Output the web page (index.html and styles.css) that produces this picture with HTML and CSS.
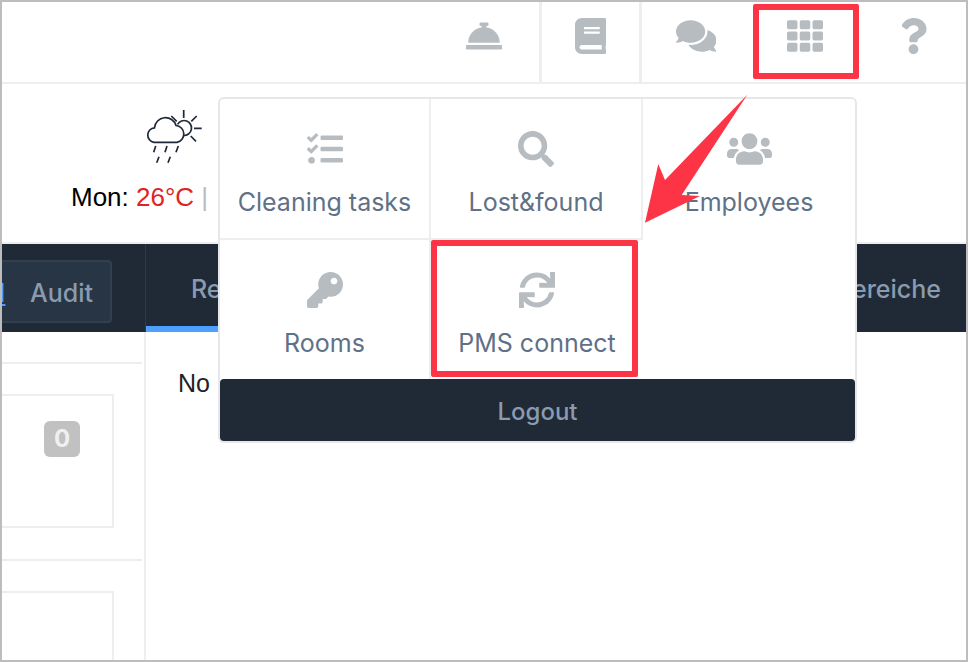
FILE: index.html
```html
<!DOCTYPE html>
<html lang="en">
<head>
    <meta charset="UTF-8">
    <title>Hotel dashboard</title>
    <link rel="stylesheet" href="styles.css">
</head>
<body>
    <div class="frame">
        <div class="topbar">
            <div class="tool tool-bell">
                <svg class="icon" viewBox="0 0 512 512"><path d="M288 130.54V112h16c8.84 0 16-7.16 16-16V80c0-8.84-7.16-16-16-16h-96c-8.84 0-16 7.16-16 16v16c0 8.84 7.16 16 16 16h16v18.54C115.49 146.11 32 236.18 32 352h448c0-115.82-83.49-205.89-192-221.46zM496 384H16c-8.84 0-16 7.16-16 16v32c0 8.84 7.16 16 16 16h480c8.84 0 16-7.16 16-16v-32c0-8.84-7.16-16-16-16z"/></svg>
            </div>
            <div class="tool tool-book">
                <svg class="icon" viewBox="0 0 448 512"><path d="M448 360V24c0-13.3-10.7-24-24-24H96C43 0 0 43 0 96v320c0 53 43 96 96 96h328c13.3 0 24-10.7 24-24v-16c0-7.5-3.5-14.3-8.9-18.7-4.2-15.4-4.2-59.3 0-74.7 5.4-4.3 8.9-11.1 8.9-18.6zM128 134c0-3.3 2.7-6 6-6h212c3.3 0 6 2.7 6 6v20c0 3.3-2.7 6-6 6H134c-3.3 0-6-2.7-6-6v-20zm0 64c0-3.3 2.7-6 6-6h212c3.3 0 6 2.7 6 6v20c0 3.3-2.7 6-6 6H134c-3.3 0-6-2.7-6-6v-20zm253.4 250H96c-17.7 0-32-14.3-32-32 0-17.6 14.4-32 32-32h285.4c-1.9 17.1-1.9 46.9 0 64z"/></svg>
            </div>
            <div class="tool tool-chat">
                <svg class="icon" viewBox="0 0 576 512"><path d="M416 192c0-88.4-93.1-160-208-160S0 103.6 0 192c0 34.3 14.1 65.9 38 92-13.4 30.2-35.5 54.2-35.8 54.5-2.2 2.3-2.8 5.7-1.5 8.7S4.8 352 8 352c36.6 0 66.9-12.3 88.7-25 32.2 15.7 70.3 25 111.3 25 114.9 0 208-71.6 208-160zm122 220c23.9-26 38-57.7 38-92 0-66.9-53.5-124.2-129.3-148.1.9 6.6 1.3 13.3 1.3 20.1 0 105.9-107.7 192-240 192-10.8 0-21.3-.8-31.7-1.9C207.8 439.6 281.8 480 368 480c41 0 79.1-9.2 111.3-25 21.8 12.7 52.1 25 88.7 25 3.2 0 6.1-1.9 7.3-4.8 1.3-2.9.7-6.3-1.5-8.7-.3-.3-22.4-24.2-35.8-54.5z"/></svg>
            </div>
            <div class="tool tool-apps">
                <svg class="icon" viewBox="0 0 512 512">
                    <rect x="0" y="32" width="149" height="128" rx="24"/><rect x="181" y="32" width="150" height="128" rx="24"/><rect x="363" y="32" width="149" height="128" rx="24"/>
                    <rect x="0" y="192" width="149" height="128" rx="24"/><rect x="181" y="192" width="150" height="128" rx="24"/><rect x="363" y="192" width="149" height="128" rx="24"/>
                    <rect x="0" y="352" width="149" height="128" rx="24"/><rect x="181" y="352" width="150" height="128" rx="24"/><rect x="363" y="352" width="149" height="128" rx="24"/>
                </svg>
            </div>
            <div class="tool tool-help">
                <svg class="icon" viewBox="0 0 384 512"><path d="M202.021 0C122.202 0 70.503 32.703 29.914 91.026c-7.363 10.58-5.093 25.086 5.178 32.874l43.138 32.709c10.373 7.865 25.132 6.026 33.253-4.148 25.049-31.381 43.63-49.449 82.757-49.449 30.764 0 68.816 19.799 68.816 49.631 0 22.552-18.617 34.134-48.993 51.164-35.423 19.86-82.299 44.576-82.299 106.405V320c0 13.255 10.745 24 24 24h72.471c13.255 0 24-10.745 24-24v-5.773c0-42.86 125.268-44.645 125.268-160.627C377.504 66.256 286.902 0 202.021 0zM192 373.459c-38.196 0-69.271 31.075-69.271 69.271 0 38.195 31.075 69.27 69.271 69.27s69.271-31.075 69.271-69.271-31.075-69.27-69.271-69.27z"/></svg>
            </div>
        </div>

        <div class="weather">
            <svg class="weather-icon" viewBox="0 0 57 55">
                <path d="M8 32.3a7.3 7.3 0 0 1 .5-14.5A11 11 0 0 1 30 15.5a8.5 8.5 0 0 1 1 16.8z"/>
                <path d="M31.5 14.3A7.5 7.5 0 1 1 37.5 25.5"/>
                <path d="M37.7 0v8M50.7 6l-5.4 5.3M48 18.3h7.7M44.7 26l5.3 5.3M25.3 6l5.4 5.3"/>
                <path d="M9.7 36l-2 6.3M21 36l-2 6.3M32.3 36l-2.3 6.3M13 46.7l-2.3 6M24.3 46.7l-2.3 6"/>
            </svg>
            <div class="forecast">Mon: <span class="temp">26°C</span> <span class="sep">|</span></div>
        </div>

        <div class="darkbar">
            <div class="audit-btn"><a class="audit-link" href="#">1</a><span>Audit</span></div>
            <div class="tab tab-active">Reinigung</div>
            <div class="tab tab-last">Bereiche</div>
        </div>

        <div class="main">
            <div class="queue">
                <div class="queue-row">
                    <div class="queue-card"><span class="badge">0</span></div>
                </div>
                <div class="queue-row">
                    <div class="queue-card"></div>
                </div>
            </div>
            <div class="content">No</div>
        </div>

        <div class="menu">
            <div class="menu-grid">
                <div class="menu-item">
                    <svg class="icon" viewBox="0 0 512 512"><path d="M139.61 35.5a12 12 0 0 0-17 0L58.93 98.81l-22.7-22.12a12 12 0 0 0-17 0L3.53 92.41a12 12 0 0 0 0 17l47.59 47.4a12.78 12.78 0 0 0 17.61 0l15.59-15.62L156.52 69a12.09 12.09 0 0 0 .09-17zm0 159.19a12 12 0 0 0-17 0l-63.68 63.72-22.7-22.1a12 12 0 0 0-17 0L3.53 252a12 12 0 0 0 0 17L51 316.5a12.77 12.77 0 0 0 17.6 0l15.7-15.69 72.2-72.22a12 12 0 0 0 .09-16.9zM64 368c-26.49 0-48.59 21.5-48.59 48S37.53 464 64 464a48 48 0 0 0 0-96zm432 16H208a16 16 0 0 0-16 16v32a16 16 0 0 0 16 16h288a16 16 0 0 0 16-16v-32a16 16 0 0 0-16-16zm0-320H208a16 16 0 0 0-16 16v32a16 16 0 0 0 16 16h288a16 16 0 0 0 16-16V80a16 16 0 0 0-16-16zm0 160H208a16 16 0 0 0-16 16v32a16 16 0 0 0 16 16h288a16 16 0 0 0 16-16v-32a16 16 0 0 0-16-16z"/></svg>
                    <span>Cleaning tasks</span>
                </div>
                <div class="menu-item">
                    <svg class="icon" viewBox="0 0 512 512"><path d="M505 442.7L405.3 343c-4.5-4.5-10.6-7-17-7H372c27.6-35.3 44-79.7 44-128C416 93.1 322.9 0 208 0S0 93.1 0 208s93.1 208 208 208c48.3 0 92.7-16.4 128-44v16.3c0 6.4 2.5 12.5 7 17l99.7 99.7c9.4 9.4 24.6 9.4 33.9 0l28.3-28.3c9.4-9.4 9.4-24.6.1-34zM208 336c-70.7 0-128-57.2-128-128 0-70.7 57.2-128 128-128 70.7 0 128 57.2 128 128 0 70.7-57.2 128-128 128z"/></svg>
                    <span>Lost&amp;found</span>
                </div>
                <div class="menu-item">
                    <svg class="icon" viewBox="0 0 640 512"><path d="M96 224c35.3 0 64-28.7 64-64s-28.7-64-64-64-64 28.7-64 64 28.7 64 64 64zm448 0c35.3 0 64-28.7 64-64s-28.7-64-64-64-64 28.7-64 64 28.7 64 64 64zm32 32h-64c-17.6 0-33.5 7.1-45.1 18.6 40.3 22.1 68.9 62 75.1 109.4h66c17.7 0 32-14.3 32-32v-32c0-35.3-28.7-64-64-64zm-256 0c61.9 0 112-50.1 112-112S381.9 32 320 32 208 82.1 208 144s50.1 112 112 112zm76.8 32h-8.3c-20.8 10-43.9 16-68.5 16s-47.6-6-68.5-16h-8.3C179.6 288 128 339.6 128 403.2V432c0 26.5 21.5 48 48 48h288c26.5 0 48-21.5 48-48v-28.8c0-63.6-51.6-115.2-115.2-115.2zm-223.7-13.4C161.5 263.1 145.6 256 128 256H64c-35.3 0-64 28.7-64 64v32c0 17.7 14.3 32 32 32h65.9c6.3-47.4 34.9-87.3 75.2-109.4z"/></svg>
                    <span>Employees</span>
                </div>
                <div class="menu-item">
                    <svg class="icon" viewBox="0 0 512 512"><path d="M512 176.001C512 273.203 433.202 352 336 352c-11.22 0-22.19-1.062-32.827-3.069l-24.012 27.014A23.999 23.999 0 0 1 261.223 384H224v40c0 13.255-10.745 24-24 24h-40v40c0 13.255-10.745 24-24 24H24c-13.255 0-24-10.745-24-24v-78.059c0-6.365 2.529-12.47 7.029-16.971l161.802-161.802C163.108 213.814 160 195.271 160 176 160 78.798 238.797.001 335.999 0 433.488-.001 512 78.511 512 176.001zM336 128c0 26.51 21.49 48 48 48s48-21.49 48-48-21.49-48-48-48-48 21.49-48 48z"/></svg>
                    <span>Rooms</span>
                </div>
                <div class="menu-item">
                    <svg class="icon" viewBox="0 0 512 512"><path d="M440.65 12.57l4 82.77A247.16 247.16 0 0 0 255.83 8C134.73 8 33.91 94.92 12.29 209.82A12 12 0 0 0 24.09 224h49.05a12 12 0 0 0 11.67-9.26 175.91 175.91 0 0 1 317-56.94l-101.46-4.86a12 12 0 0 0-12.57 12v47.41a12 12 0 0 0 12 12H500a12 12 0 0 0 12-12V12a12 12 0 0 0-12-12h-47.37a12 12 0 0 0-11.98 12.57zM255.83 432a175.61 175.61 0 0 1-146-77.8l101.8 4.87a12 12 0 0 0 12.57-12v-47.4a12 12 0 0 0-12-12H12a12 12 0 0 0-12 12V500a12 12 0 0 0 12 12h47.35a12 12 0 0 0 12-12.6l-4.15-82.57A247.17 247.17 0 0 0 255.83 504c121.11 0 221.93-86.92 243.55-201.82a12 12 0 0 0-11.8-14.18h-49.05a12 12 0 0 0-11.67 9.26A175.86 175.86 0 0 1 255.83 432z"/></svg>
                    <span>PMS connect</span>
                </div>
                <div class="menu-item"></div>
            </div>
            <div class="logout">Logout</div>
        </div>

        <!-- markers drawn over the screenshot -->
        <div class="marker marker-apps"></div>
        <div class="marker marker-pms"></div>
        <svg class="arrow" viewBox="0 0 110 135"><polygon points="105.3,2.7 23,88 16.3,72 3,130.7 58,104 39.7,103"/></svg>
    </div>
</body>
</html>
```

FILE: styles.css
```css
* {
    box-sizing: border-box;
}
body {
    margin: 0;
    font-family: 'Inter', sans-serif;
    background: white;
}
.frame {
    position: relative;
    display: flex;
    flex-direction: column;
    width: 968px;
    height: 662px;
    border: 2px solid #bdbdbd;
    overflow: hidden;
    background: white;
}
.icon {
    display: block;
    height: 36px;
    fill: currentColor;
}

/* top bar */
.topbar {
    display: flex;
    justify-content: flex-end;
    flex: none;
    height: 82px;
    border-bottom: 2px solid #eeeeee;
    color: #b7bcc1;
}
.tool {
    display: flex;
    justify-content: center;
    padding-top: 16px;
}
.tool-bell { width: 111px; }
.tool-book { width: 100px; border-left: 3px solid #eeeeee; }
.tool-chat { width: 111px; border-left: 3px solid #eeeeee; }
.tool-apps { width: 110px; }
.tool-help { width: 106px; }

/* weather */
.weather {
    flex: none;
    height: 158px;
    padding: 26px 0 0 69px;
}
.weather-icon {
    display: block;
    width: 57px;
    height: 55px;
    margin-left: 75px;
    fill: none;
    stroke: #1f2937;
    stroke-width: 1.7;
}
.forecast {
    margin-top: 17px;
    font-family: 'Liberation Sans', sans-serif;
    font-size: 26px;
    line-height: 30px;
    color: black;
    white-space: nowrap;
}
.temp {
    color: #e02424;
}
.sep {
    color: #b7bcc1;
}

/* dark bar */
.darkbar {
    display: flex;
    flex: none;
    height: 90px;
    border-top: 2px solid #eeeeee;
    background: #1f2a36;
    color: #8a9bb0;
    font-size: 25px;
    font-weight: 500;
}
.audit-btn {
    display: flex;
    align-items: center;
    flex: none;
    width: 150px;
    height: 63px;
    margin: 16px 33px 0 -40px;
    padding: 2px 0 0 31px;
    background: #283545;
    border: 2px solid #323f4f;
    border-radius: 4px;
}
.audit-link {
    width: 35px;
    color: #4da0ff;
}
.tab {
    flex: none;
    padding-top: 30px;
    line-height: 30px;
    white-space: nowrap;
}
.tab-active {
    width: 300px;
    padding-left: 45px;
    border-left: 1px solid #2f3a49;
    box-shadow: inset 0 -6px 0 #4da0ff;
}
.tab-last {
    margin-left: auto;
    padding-right: 25px;
}

/* content under the bar */
.main {
    display: flex;
    flex: 1;
    min-height: 0;
}
.queue {
    flex: none;
    width: 144px;
    padding-top: 30px;
    border-right: 2px solid #eeeeee;
}
.queue-row {
    margin-right: 2px;
    padding: 30px 28px 31px 0;
    border-top: 2px solid #eeeeee;
}
.queue-card {
    height: 134px;
    padding: 25px 0 0 42px;
    border: 2px solid #eeeeee;
    border-left: none;
}
.badge {
    display: block;
    width: 36px;
    height: 36px;
    background: #c1c1c1;
    border-radius: 6px;
    color: #f0f0f0;
    font-size: 24px;
    font-weight: 700;
    line-height: 36px;
    text-align: center;
}
.content {
    padding: 36px 0 0 32px;
    font-family: 'Liberation Sans', sans-serif;
    font-size: 25px;
    line-height: 30px;
    color: #222222;
}

/* apps menu */
.menu {
    position: absolute;
    left: 216px;
    top: 95px;
    width: 639px;
    height: 346px;
    background: white;
    border: 2px solid #e5e7eb;
    border-radius: 6px;
}
.menu-grid {
    display: grid;
    grid-template-columns: 211px 212px 212px;
    grid-template-rows: 141px 139px;
}
.menu-item {
    display: flex;
    flex-direction: column;
    align-items: center;
    padding-top: 32px;
    border-right: 2px solid #eeeeee;
    border-bottom: 2px solid #eeeeee;
    color: #b7bcc1;
}
.menu-item span {
    margin-top: 17px;
    color: #5f7186;
    font-size: 25px;
    line-height: 36px;
}
.menu-item:nth-child(3) {
    border-right: none;
    border-bottom: none;
}
.menu-item:nth-child(n+4) {
    border-bottom: none;
}
.menu-item:nth-child(n+5) {
    border-right: none;
}
.logout {
    height: 62px;
    background: #1f2a36;
    border-radius: 4px;
    color: #8a9bb0;
    font-size: 24px;
    font-weight: 500;
    line-height: 66px;
    text-align: center;
}

/* red markers */
.marker {
    position: absolute;
    border: 6px solid #fd3346;
    border-radius: 2px;
}
.marker-apps {
    left: 751px;
    top: 2px;
    width: 106px;
    height: 75px;
}
.marker-pms {
    left: 429px;
    top: 238px;
    width: 207px;
    height: 137px;
}
.arrow {
    position: absolute;
    left: 640px;
    top: 90px;
    width: 110px;
    height: 135px;
    fill: #fd3346;
}
```
